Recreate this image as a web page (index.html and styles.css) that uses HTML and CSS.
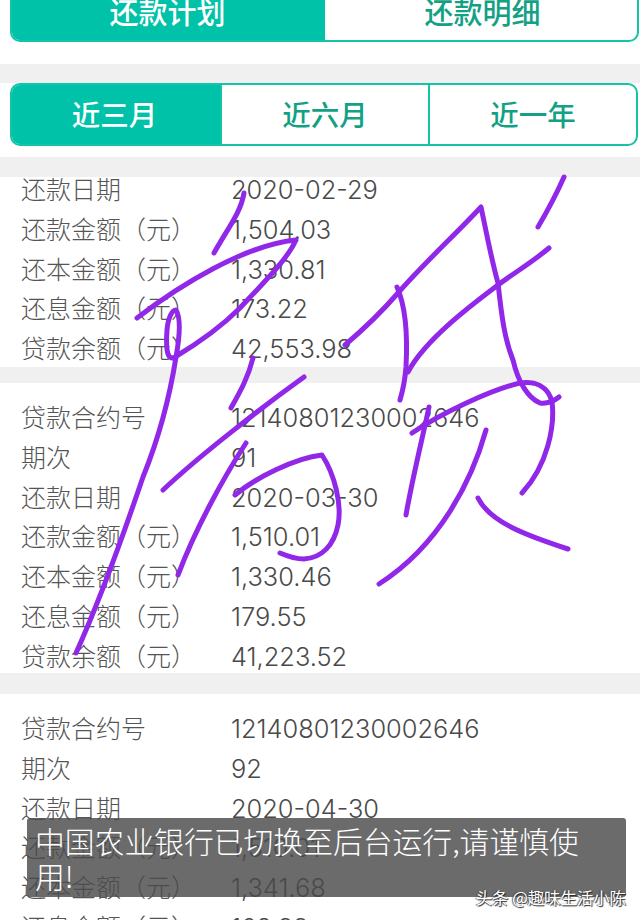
FILE: index.html
```html
<!DOCTYPE html>
<html lang="zh">
<head>
<meta charset="utf-8">
<title>还款计划</title>
<link rel="stylesheet" href="styles.css">
</head>
<body>
<div class="page">
  <div class="plan-tabs">
    <div class="plan-tab active">还款计划</div>
    <div class="plan-tab">还款明细</div>
  </div>
  <div class="band band-top"></div>
  <div class="range-wrap">
    <div class="range-tabs">
      <div class="range-tab active">近三月</div>
      <div class="range-tab">近六月</div>
      <div class="range-tab">近一年</div>
    </div>
  </div>
  <div class="band band-mid"></div>

  <div class="block block-cut">
    <div class="row"><span class="key">还款日期</span><span class="val">2020-02-29</span></div>
    <div class="row"><span class="key">还款金额（元）</span><span class="val">1,504.03</span></div>
    <div class="row"><span class="key">还本金额（元）</span><span class="val">1,330.81</span></div>
    <div class="row"><span class="key">还息金额（元）</span><span class="val">173.22</span></div>
    <div class="row"><span class="key">贷款余额（元）</span><span class="val">42,553.98</span></div>
  </div>
  <div class="band band-a"></div>

  <div class="block block-full">
    <div class="row"><span class="key">贷款合约号</span><span class="val">12140801230002646</span></div>
    <div class="row"><span class="key">期次</span><span class="val">91</span></div>
    <div class="row"><span class="key">还款日期</span><span class="val">2020-03-30</span></div>
    <div class="row"><span class="key">还款金额（元）</span><span class="val">1,510.01</span></div>
    <div class="row"><span class="key">还本金额（元）</span><span class="val">1,330.46</span></div>
    <div class="row"><span class="key">还息金额（元）</span><span class="val">179.55</span></div>
    <div class="row"><span class="key">贷款余额（元）</span><span class="val">41,223.52</span></div>
  </div>
  <div class="band band-b"></div>

  <div class="block">
    <div class="row"><span class="key">贷款合约号</span><span class="val">12140801230002646</span></div>
    <div class="row"><span class="key">期次</span><span class="val">92</span></div>
    <div class="row"><span class="key">还款日期</span><span class="val">2020-04-30</span></div>
    <div class="row"><span class="key">还款金额（元）</span><span class="val">1,510.01</span></div>
    <div class="row"><span class="key">还本金额（元）</span><span class="val">1,341.68</span></div>
    <div class="row"><span class="key">还息金额（元）</span><span class="val">168.33</span></div>
  </div>

  <!-- handwriting over the page -->
  <svg class="scrawl" viewBox="0 0 640 920" width="640" height="920">
    <path d="M244 193C241 212 228 228 214 253"/>
    <path d="M137 318C180 285 245 245 296 240C288 258 268 278 240 308C220 328 195 345 175 357C166 362 166 345 167 330C168 318 172 310 176 310C181 318 180 335 176 357C170 395 158 440 143 477C125 530 100 600 76 653"/>
    <path d="M253 358C248 378 240 392 231 408"/>
    <path d="M304 377C265 405 200 455 163 490"/>
    <path d="M246 443C222 480 195 530 178 575"/>
    <path d="M235 495C255 478 295 458 322 455C335 475 342 505 338 525C334 545 322 558 304 559C294 559 287 556 280 553"/>
    <path d="M345 345C365 328 385 308 398 293C425 262 455 235 481 207C488 240 492 262 498 283C502 320 505 340 513 360C518 382 528 398 540 403C548 404 554 401 559 397"/>
    <path d="M412 433C440 414 490 390 520 383C535 381 548 386 552 402C555 425 548 465 522 493"/>
    <path d="M397 287C405 305 408 330 406 367C405 380 403 390 400 400"/>
    <path d="M549 248C530 264 515 272 498 285C470 306 425 340 408 372"/>
    <path d="M564 177C556 195 548 210 538 227"/>
    <path d="M429 407C422 440 412 480 406 515"/>
    <path d="M486 430C472 480 440 545 379 584"/>
    <path d="M478 498C490 522 525 535 568 549"/>
  </svg>

  <div class="toast">中国农业银行已切换至后台运行,请谨慎使用!</div>
  <div class="mark">头条 @趣味生活小陈</div>
</div>
</body>
</html>
```

FILE: styles.css
```css
html, body {
  margin: 0;
  padding: 0;
  background: #fff;
}
.page {
  position: relative;
  width: 640px;
  height: 920px;
  overflow: hidden;
  background: #fff;
  font-family: "Noto Sans CJK SC", sans-serif;
}

/* tab bars */
.plan-tabs {
  display: flex;
  height: 42px;
  margin: 0 1px 0 10px;
  box-sizing: border-box;
  border: 2px solid #12c4a8;
  border-top: 0;
  border-radius: 0 0 10px 10px;
  overflow: hidden;
}
.plan-tab {
  flex: 1;
  height: 22px;
  line-height: 22px;
  padding-left: 3px;
  text-align: center;
  font-size: 29px;
  font-weight: 500;
  color: #12a184;
}
.plan-tab.active {
  flex: 0 0 313px;
  box-sizing: border-box;
  height: auto;
  padding: 0 2px 0 0;
  color: #fff;
  background: #00c2a8;
}
.range-wrap {
  padding: 0 2px 11px 10px;
}
.range-tabs {
  display: flex;
  height: 63px;
  box-sizing: border-box;
  border: 2px solid #12c4a8;
  border-radius: 10px;
  overflow: hidden;
}
.range-tab {
  flex: 1;
  line-height: 58px;
  text-align: center;
  font-size: 28.5px;
  font-weight: 500;
  color: #12a184;
  border-left: 2px solid #12c4a8;
}
.range-tab.active {
  flex: 0 0 208px;
  box-sizing: border-box;
  padding-right: 3px;
  color: #fff;
  background: #00c2a8;
  border-left: 0;
}

/* grey separators */
.band {
  position: relative;
  background: #f0f0f0;
}
.band-top { height: 19px; margin-top: 22px; }
.band-mid { height: 20px; }
.band-a { height: 16px; }
.band-b { height: 21px; }

/* repayment rows */
.block {
  padding: 14px 0 0 21px;
}
.block-cut {
  height: 191px;
  margin-bottom: -1px;
  padding: 0 0 0 21px;
  box-sizing: border-box;
  display: flex;
  flex-direction: column;
  justify-content: flex-end;
  overflow: hidden;
}
.block-full {
  height: 290px;
  box-sizing: border-box;
  overflow: hidden;
}
.row {
  display: flex;
  flex-shrink: 0;
  height: 39.8px;
  line-height: 39.8px;
  color: #555;
}
.key {
  width: 210px;
  font-size: 25px;
  font-weight: 300;
}
.val {
  padding-top: 1px;
  font-family: "Inter", sans-serif;
  font-size: 25.4px;
  font-weight: 300;
  color: #4a4a4a;
}

/* overlays */
.scrawl {
  position: absolute;
  left: 0;
  top: 0;
  fill: none;
  stroke: #9127e8;
  stroke-width: 5;
  stroke-linecap: round;
  stroke-linejoin: round;
}
.toast {
  position: absolute;
  left: 27px;
  top: 818px;
  width: 599px;
  height: 79px;
  box-sizing: border-box;
  padding: 5px 40px 0 8px;
  border-radius: 3px;
  background: rgba(74, 74, 74, 0.82);
  color: #fff;
  font-size: 29.8px;
  font-weight: 300;
  line-height: 35px;
}
.mark {
  position: absolute;
  right: 14px;
  top: 885px;
  color: #fff;
  font-size: 16.4px;
  line-height: 24px;
  white-space: nowrap;
  text-shadow: 1px 1px 1px #222, -1px 0 1px #444;
}
```
